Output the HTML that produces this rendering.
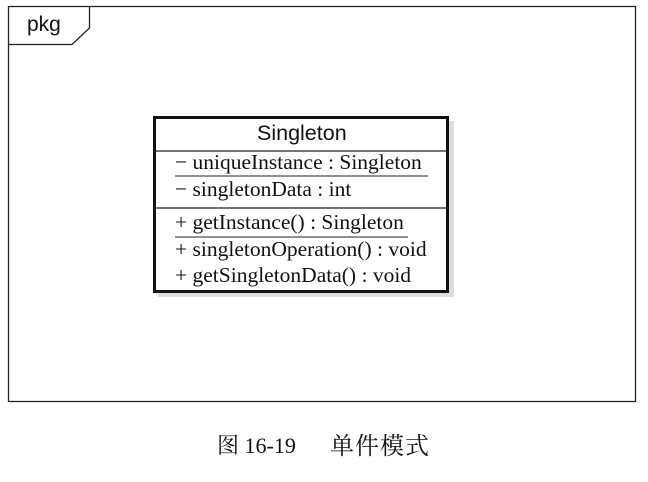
<!DOCTYPE html>
<html><head><style>
body{margin:0;width:648px;height:482px;background:#fff;position:relative;overflow:hidden;font-family:"Liberation Serif",serif;color:#111}
.a{position:absolute}
.t{position:absolute;font-size:21.5px;white-space:nowrap;line-height:1}
</style></head><body>
<svg class="a" style="left:0;top:0" width="648" height="482">
<rect x="8.5" y="6.5" width="627" height="395" fill="none" stroke="#222" stroke-width="1.3"/>
<polyline points="8.5,44.5 72,44.5 89.5,28 89.5,6.5" fill="none" stroke="#222" stroke-width="1.3"/>
<rect x="158" y="121" width="296" height="176" fill="#ddd"/>
<rect x="154.5" y="117.5" width="293" height="174" fill="#fff" stroke="#111" stroke-width="3"/>
<line x1="154" y1="151" x2="448" y2="151" stroke="#222" stroke-width="1.2"/>
<line x1="154" y1="208" x2="448" y2="208" stroke="#222" stroke-width="1.2"/>
<line x1="175" y1="176" x2="428" y2="176" stroke="#222" stroke-width="1"/>
<line x1="175" y1="237" x2="408" y2="237" stroke="#222" stroke-width="1"/>
</svg>
<div class="t" style="left:27px;top:14px;font-family:'Liberation Sans',sans-serif;font-size:21px">pkg</div>
<div class="t" style="left:257px;top:123px;font-family:'Liberation Sans',sans-serif;font-size:21.5px">Singleton</div>
<div class="t" style="left:175px;top:152px">− uniqueInstance : Singleton</div>
<div class="t" style="left:175px;top:179px">− singletonData : int</div>
<div class="t" style="left:175px;top:212px">+ getInstance() : Singleton</div>
<div class="t" style="left:175px;top:239px">+ singletonOperation() : void</div>
<div class="t" style="left:175px;top:265px">+ getSingletonData() : void</div>
<div class="t" style="left:217px;top:435px;font-size:22px;font-family:'Liberation Serif','Noto Serif CJK SC',serif">图 16-19</div>
<div class="t" style="left:330px;top:435px;font-size:24px;letter-spacing:1px;font-family:'Liberation Serif','Noto Serif CJK SC',serif">单件模式</div>
</body></html>
